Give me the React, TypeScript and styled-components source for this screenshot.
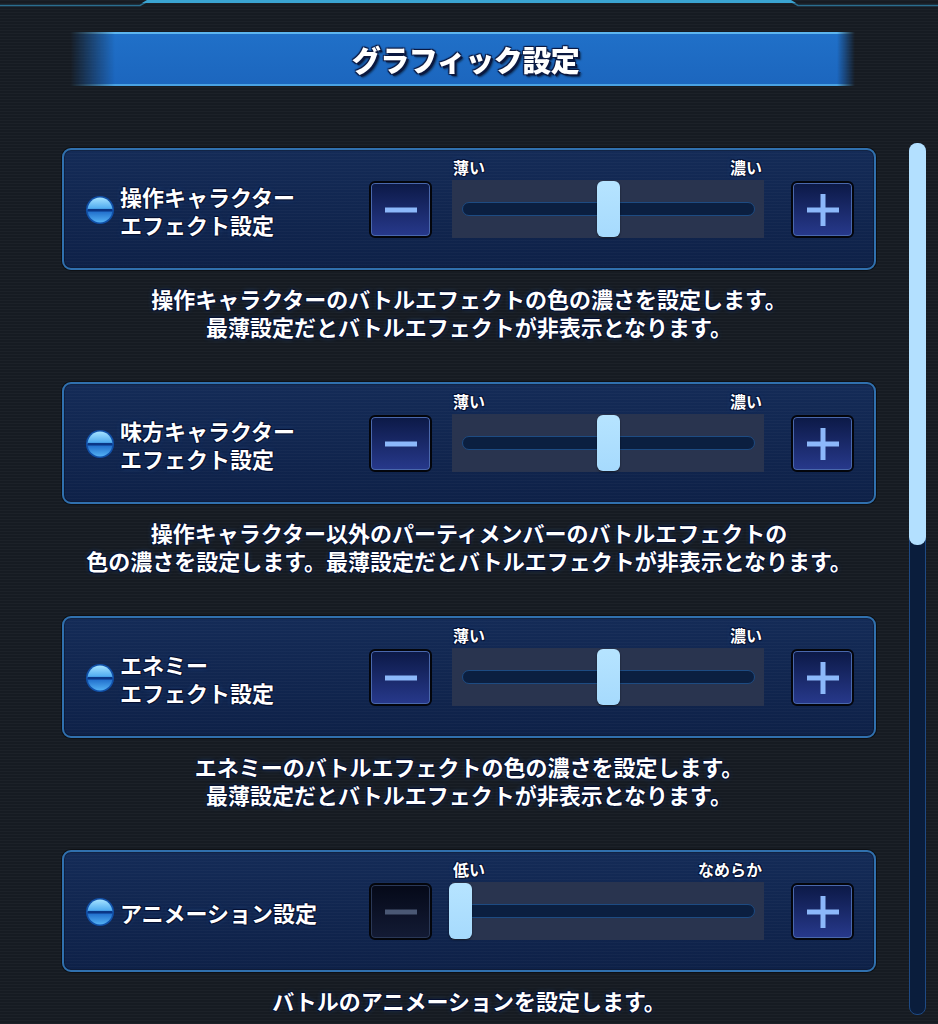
import { Fragment } from 'react';
import { createGlobalStyle, css, styled } from 'styled-components';

const GlobalStyle = createGlobalStyle`
    html, body {
        margin: 0;
        padding: 0;
        background: #161b22;
    }
    body {
        width: 938px;
        height: 1024px;
        overflow: hidden;
        font-family: "Noto Sans CJK JP", "Noto Sans", sans-serif;
    }
`;

const outline = css`
    color: #ffffff;
    text-shadow:
        1px 1px 1px #061030,
        -1px -1px 1px #061030,
        1px -1px 1px #061030,
        -1px 1px 1px #061030,
        0 0 5px rgba(70, 150, 255, 0.35);
`;

const Screen = styled.div`
    width: 938px;
    height: 1024px;
    overflow: hidden;
    background-color: #161b22;
    background-image: repeating-linear-gradient(
        to bottom,
        rgba(255, 255, 255, 0.028) 0 1px,
        transparent 1px 3px
    );
`;

const FrameSvg = styled.svg`
    display: block;
`;

const TitleBar = styled.div`
    margin: 24px 83px 0 70px;
    height: 54px;
    padding-left: 6px;
    display: flex;
    align-items: center;
    justify-content: center;
    background: linear-gradient(
        to bottom,
        #5db6ef 0 2px,
        #2070c8 2px,
        #1c66be calc(100% - 2px),
        #4aa2e2 calc(100% - 2px)
    );
    mask-image: linear-gradient(to right, transparent 0, #000 45px, #000 calc(100% - 18px), transparent 100%);
`;

const Title = styled.h1`
    margin: 0;
    font-size: 29px;
    font-weight: 900;
    letter-spacing: -0.5px;
    color: #ffffff;
    text-shadow:
        2px 2px 0 #0a1840,
        -1px -1px 1px #0a1840,
        1px -1px 1px #0a1840,
        -1px 1px 1px #0a1840,
        3px 3px 2px rgba(0, 0, 0, 0.5);
`;

const Body = styled.div`
    display: flex;
    gap: 33px;
    margin-top: 57px;
    padding-left: 62px;
`;

const List = styled.div`
    width: 814px;
    padding-top: 5px;
    display: flex;
    flex-direction: column;
`;

const Card = styled.div`
    height: 122px;
    box-sizing: border-box;
    border: 2px solid #3070ae;
    border-radius: 9px;
    background:
        repeating-linear-gradient(to bottom, rgba(255, 255, 255, 0.025) 0 1px, transparent 1px 3px),
        linear-gradient(#142b57, #0e2148);
    box-shadow: 0 0 0 1px rgba(0, 0, 0, 0.5), inset 0 0 0 1px rgba(0, 0, 0, 0.25);
    display: flex;
    align-items: flex-start;
    padding: 8px 0 0 22px;
`;

const Label = styled.div`
    flex: 0 0 283px;
    height: 57px;
    margin-top: 23px;
    display: flex;
    align-items: center;
    gap: 6px;
`;

const BulletSvg = styled.svg`
    flex: none;
    display: block;
`;

const LabelText = styled.div`
    ${outline};
    font-size: 22px;
    font-weight: 700;
    line-height: 28px;
`;

const StepButton = styled.button<{ $disabled?: boolean }>`
    flex: none;
    width: 63px;
    height: 57px;
    margin-top: 23px;
    padding: 0;
    box-sizing: border-box;
    border: 2px solid #03050b;
    border-radius: 6px;
    background: linear-gradient(#0c1946, #27398c);
    box-shadow: inset 0 0 0 1px #4a68ac;
    display: flex;
    align-items: center;
    justify-content: center;
    color: #8cb8fa;
    cursor: pointer;
    ${(p) =>
        p.$disabled &&
        css`
            background: linear-gradient(#050918, #131b35);
            box-shadow: inset 0 0 0 1px #2a3856;
            color: #4a5874;
            cursor: default;
        `}
`;

const Slider = styled.div`
    flex: 0 0 312px;
    margin: 0 27px 0 20px;
    display: flex;
    flex-direction: column;
`;

const Ends = styled.div`
    ${outline};
    height: 22px;
    display: flex;
    justify-content: space-between;
    align-items: flex-start;
    padding: 0 2px 0 1px;
    font-size: 16px;
    font-weight: 700;
    line-height: 18px;
`;

const Track = styled.div`
    position: relative;
    height: 58px;
    padding: 0 9px 0 10px;
    display: flex;
    align-items: center;
    background: #29344f;
`;

const Rail = styled.div`
    flex: 1;
    height: 14px;
    box-sizing: border-box;
    border: 1px solid #1d4b82;
    border-radius: 7px;
    background: #0b1f40;
`;

const Thumb = styled.div`
    position: absolute;
    top: 1px;
    bottom: 1px;
    width: 23px;
    border-radius: 6px;
    background: linear-gradient(#b6e4ff, #a6dafd);
    box-shadow: 0 1px 2px rgba(0, 0, 0, 0.5);
`;

const Desc = styled.p`
    ${outline};
    margin: 0;
    padding: 14px 0 42px;
    text-align: center;
    font-size: 22px;
    font-weight: 700;
    line-height: 28px;
`;

const ScrollTrack = styled.div`
    flex: none;
    width: 17px;
    height: 872px;
    box-sizing: border-box;
    border: 1px solid #1e4a85;
    border-radius: 8px;
    background: #0a1d3c;
`;

const ScrollThumb = styled.div`
    height: 402px;
    margin: -1px;
    border-radius: 8px;
    background: #b3e0ff;
`;

function TopFrame() {
    return (
        <FrameSvg width="938" height="8" viewBox="0 0 938 8">
            <path d="M0 5.5 H140 L147 1.5 H791 L798 5.5 H938" fill="none" stroke="#2a6d8e" strokeWidth="1.5" />
            <path d="M147 0 H791 L796 3 H142 Z" fill="#3aa4d2" />
        </FrameSvg>
    );
}

function Bullet() {
    return (
        <BulletSvg width="28" height="28" viewBox="0 0 26 26">
            <defs>
                <linearGradient id="bullet-top" x1="0" y1="0" x2="0" y2="1">
                    <stop offset="0" stopColor="#a4e2ff" />
                    <stop offset="1" stopColor="#44a4ee" />
                </linearGradient>
                <linearGradient id="bullet-bottom" x1="0" y1="0" x2="0" y2="1">
                    <stop offset="0" stopColor="#1a66c6" />
                    <stop offset="1" stopColor="#52b0f4" />
                </linearGradient>
            </defs>
            <circle cx="13" cy="13" r="13" fill="#1150a8" />
            <path d="M1.5 13 A11.5 11.5 0 0 1 24.5 13 Z" fill="url(#bullet-top)" />
            <path d="M1.5 13 A11.5 11.5 0 0 0 24.5 13 Z" fill="url(#bullet-bottom)" />
            <rect x="1.5" y="12" width="23" height="2.4" fill="#0a3686" />
        </BulletSvg>
    );
}

function Sign({ plus }: { plus?: boolean }) {
    return (
        <svg width="34" height="34" viewBox="0 0 34 34">
            <rect x="1" y="14.5" width="32" height="5" fill="currentColor" />
            {plus && <rect x="14.5" y="1" width="5" height="32" fill="currentColor" />}
        </svg>
    );
}

interface Setting {
    label: string[];
    low: string;
    high: string;
    value: number;
    desc: string[];
}

const SETTINGS: Setting[] = [
    {
        label: ['操作キャラクター', 'エフェクト設定'],
        low: '薄い',
        high: '濃い',
        value: 0.5,
        desc: ['操作キャラクターのバトルエフェクトの色の濃さを設定します。', '最薄設定だとバトルエフェクトが非表示となります。'],
    },
    {
        label: ['味方キャラクター', 'エフェクト設定'],
        low: '薄い',
        high: '濃い',
        value: 0.5,
        desc: ['操作キャラクター以外のパーティメンバーのバトルエフェクトの', '色の濃さを設定します。最薄設定だとバトルエフェクトが非表示となります。'],
    },
    {
        label: ['エネミー', 'エフェクト設定'],
        low: '薄い',
        high: '濃い',
        value: 0.5,
        desc: ['エネミーのバトルエフェクトの色の濃さを設定します。', '最薄設定だとバトルエフェクトが非表示となります。'],
    },
    {
        label: ['アニメーション設定'],
        low: '低い',
        high: 'なめらか',
        value: 0,
        desc: ['バトルのアニメーションを設定します。'],
    },
];

// text nodes joined by <br>, so a multi-line text stays one element
function Lines({ lines }: { lines: string[] }) {
    return (
        <>
            {lines.map((line, i) => (
                <Fragment key={line}>
                    {i > 0 && <br />}
                    {line}
                </Fragment>
            ))}
        </>
    );
}

function SettingRow({ setting }: { setting: Setting }) {
    // thumb slides from -3px to 292px across the 312px track
    const left = -3 + setting.value * 295;

    return (
        <>
            <Card>
                <Label>
                    <Bullet />
                    <LabelText>
                        <Lines lines={setting.label} />
                    </LabelText>
                </Label>
                <StepButton $disabled={setting.value <= 0}>
                    <Sign />
                </StepButton>
                <Slider>
                    <Ends>
                        <span>{setting.low}</span>
                        <span>{setting.high}</span>
                    </Ends>
                    <Track>
                        <Rail />
                        <Thumb style={{ left }} />
                    </Track>
                </Slider>
                <StepButton $disabled={setting.value >= 1}>
                    <Sign plus />
                </StepButton>
            </Card>
            <Desc>
                <Lines lines={setting.desc} />
            </Desc>
        </>
    );
}

export default function App() {
    return (
        <Screen>
            <GlobalStyle />
            <TopFrame />
            <TitleBar>
                <Title>グラフィック設定</Title>
            </TitleBar>
            <Body>
                <List>
                    {SETTINGS.map((s) => (
                        <SettingRow key={s.label.join('')} setting={s} />
                    ))}
                </List>
                <ScrollTrack>
                    <ScrollThumb />
                </ScrollTrack>
            </Body>
        </Screen>
    );
}
